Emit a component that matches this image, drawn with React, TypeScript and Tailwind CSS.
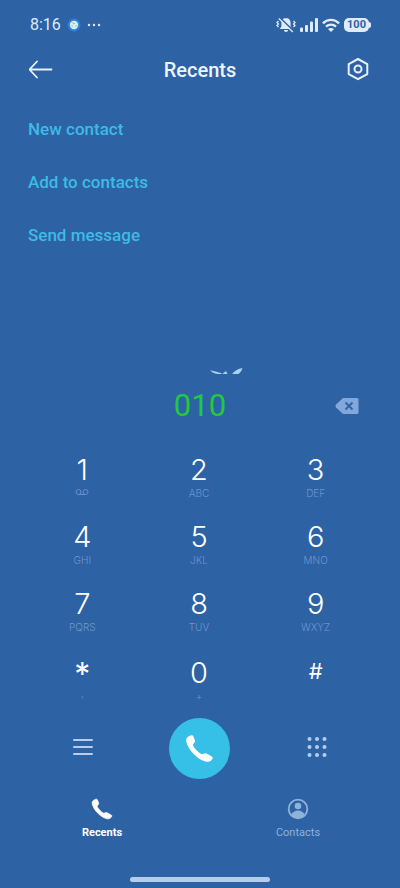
import { useState } from "react";

const KEYS = [
  { digit: "1", letters: "voicemail" },
  { digit: "2", letters: "ABC" },
  { digit: "3", letters: "DEF" },
  { digit: "4", letters: "GHI" },
  { digit: "5", letters: "JKL" },
  { digit: "6", letters: "MNO" },
  { digit: "7", letters: "PQRS" },
  { digit: "8", letters: "TUV" },
  { digit: "9", letters: "WXYZ" },
  { digit: "*", letters: "'" },
  { digit: "0", letters: "+" },
  { digit: "#", letters: "" },
];

const ACTIONS = ["New contact", "Add to contacts", "Send message"];

function digitClass(digit: string) {
  if (digit === "*") return "text-[32px] leading-9";
  if (digit === "#") return "text-[22px] leading-7";
  return "text-[29px] leading-8 font-light";
}

function HandsetIcon({ className }: { className: string }) {
  return (
    <svg viewBox="0 0 27 27" className={className} fill="currentColor" stroke="currentColor" strokeLinejoin="round" overflow="visible" aria-hidden="true">
      <path d="M.8 3C2 1.500 4 .3 6 .2c.6 0 1 .3 1.200.8L9 5.500c.2.7.1 1.200-.4 1.800L6.800 9.700c.8 2.700 5.500 8 9 9.600l2.800-.9c.7-.2 1.300-.1 1.800.2l5.500 3c.8.5 1 1.100.7 1.800-.8 2-2.600 3.300-4.800 3.400C14 27 .8 14.500.2 5.500.1 4.500.3 3.700.8 3Z" />
    </svg>
  );
}

function StatusBar() {
  return (
    <div className="flex h-12 items-center justify-between pl-[30px] pr-[29px] pt-0.5 text-[#dfeafb]">
      <div className="flex items-center">
        <span className="text-base">8:16</span>
        <svg viewBox="0 0 14 14" className="ml-1.5 size-3.5" aria-hidden="true">
          <circle cx="7" cy="7" r="6.500" fill="#2f7ee6" />
          <circle cx="7" cy="7" r="4.200" fill="#d9f3ef" />
          <path d="M5 4l4 1.500-3 1zM8.500 7l2 .5-2 2z" fill="#a8cf62" />
          <path d="M4 7l2.500 1L5 9.500z" fill="#8cc9f2" />
        </svg>
        <svg viewBox="0 0 14 4" className="ml-1.5 h-1 w-3.5" fill="currentColor" aria-hidden="true">
          <circle cx="2" cy="2" r="1.200" />
          <circle cx="7" cy="2" r="1.200" />
          <circle cx="12" cy="2" r="1.200" />
        </svg>
      </div>
      <div className="flex items-center gap-1">
        <svg viewBox="0 0 20 16" className="h-4 w-5" aria-hidden="true">
          <path d="M10 1c-3 0-4.600 2-4.600 5v3.500L3.800 12h12.400l-1.600-2.500V6c0-3-1.600-5-4.600-5ZM8 13h4c0 1.300-.8 2-2 2s-2-.7-2-2Z" fill="currentColor" />
          <path d="M2.500 4 1 5.500 2.500 7 1 8.500 2.500 10M17.500 4 19 5.500 17.500 7 19 8.500 17.500 10" fill="none" stroke="currentColor" strokeWidth="1.300" />
          <path d="M4 .8 18 14.300" stroke="#2d62a4" strokeWidth="1.600" />
          <path d="M2.800 1.500 16.800 15" stroke="currentColor" strokeWidth="1.300" />
        </svg>
        <svg viewBox="0 0 18 14" className="h-3.5 w-[18px]" fill="currentColor" aria-hidden="true">
          <rect x="0" y="9.500" width="3" height="4.500" rx="1" />
          <rect x="5" y="7" width="3" height="7" rx="1" />
          <rect x="10" y="3.500" width="3" height="10.500" rx="1" />
          <rect x="15" y="0" width="3" height="14" rx="1" />
        </svg>
        <svg viewBox="0 0 18 14" className="h-3.5 w-[18px]" fill="none" stroke="currentColor" strokeWidth="2.400" aria-hidden="true">
          <path d="M.9 5.300c4.500-4.600 11.700-4.600 16.200 0M4 8.700c2.800-2.800 7.200-2.800 10 0" />
          <path d="M9 14 6 11c1.600-1.500 4.400-1.500 6 0Z" fill="currentColor" stroke="none" />
        </svg>
        <div className="flex items-center">
          <span className="rounded-[5px] bg-[#dfeafb] px-[3px] text-[11px] leading-3.5 font-bold text-[#2d62a4]">
            100
          </span>
          <span className="h-1.5 w-0.5 rounded-r bg-[#dfeafb]" />
        </div>
      </div>
    </div>
  );
}

export default function App() {
  const [number, setNumber] = useState("010");

  return (
    <div className="flex min-h-screen flex-col bg-[#2d62a4] font-['Roboto',sans-serif] text-white">
      <StatusBar />

      <header className="flex h-11 items-center justify-between px-[29px]">
        <button type="button" aria-label="Back" className="text-[#e7f0fc]">
          <svg viewBox="0 0 24 20" className="h-5 w-6" fill="none" stroke="currentColor" strokeWidth="1.800" strokeLinecap="round" strokeLinejoin="round" aria-hidden="true">
            <path d="M22.500 9.500H.5M8 1.500l-7.500 8 7.500 8" />
          </svg>
        </button>
        <h1 className="text-xl font-medium text-[#edf4fd]">Recents</h1>
        <button type="button" aria-label="Settings" className="text-[#e7f0fc]">
          <svg viewBox="0 0 24 24" className="size-6" fill="none" stroke="currentColor" strokeWidth="2" strokeLinejoin="round" aria-hidden="true">
            <path d="M11 1 20.300 6.100v10L11 21.200 1.700 16.100v-10Z" />
            <circle cx="11" cy="11" r="3.500" />
          </svg>
        </button>
      </header>

      <nav className="mt-[11px] flex flex-col items-start px-7">
        {ACTIONS.map((label) => (
          <a key={label} href="#" className="flex h-[53px] items-center text-[17px] font-medium text-[#3dbbe5]">
            {label}
          </a>
        ))}
      </nav>

      <main className="mt-auto">
        {/* bottom edge of the empty-list illustration, cut off by the dialpad */}
        <svg viewBox="0 0 34 6" className="ml-[210px] block h-1.5 w-[34px]" fill="#a9d2f2" aria-hidden="true">
          <path d="M0 2.500C2 2.300 5 3.500 11 5L12 6H8.500C5 5.800 2 4.500 0 2.500ZM12.500 5.800 16 3l1.500 3h-5ZM22 6c3-3.500 6-5.500 10.500-6-.5 2-2 4.500-4 6Z" />
        </svg>

        <div className="grid h-16 grid-cols-[1fr_auto_1fr] items-center px-[41px]">
          <output className="col-start-2 text-[31px] text-[#22c93f]">{number}</output>
          <button
            type="button"
            aria-label="Delete digit"
            onClick={() => setNumber(number.slice(0, -1))}
            className="justify-self-end"
          >
            <svg viewBox="0 0 24 16" className="h-4 w-6" aria-hidden="true">
              <path d="M8 0h14a1.500 1.500 0 0 1 1.500 1.500v13A1.500 1.500 0 0 1 22 16H8L1 9.500Q0 8 1 6.500Z" fill="#82a8db" />
              <path d="m10.500 4.500 7 7m0-7-7 7" stroke="#2d62a4" strokeWidth="1.800" />
            </svg>
          </button>
        </div>

        <div className="grid grid-cols-3 pl-6 pr-[26px] pb-0.5 font-['Inter',sans-serif]">
          {KEYS.map(({ digit, letters }) => (
            <button
              key={digit}
              type="button"
              onClick={() => setNumber(number + digit)}
              className="flex h-[67px] flex-col items-center pt-4 nth-[n+10]:h-[69px] nth-[n+10]:pt-[18px]"
            >
              <span className={digitClass(digit)}>{digit}</span>
              {letters === "voicemail" ? (
                <svg viewBox="0 0 14 8" className="mt-0.5 h-2 w-3.5" fill="none" stroke="#6890c8" aria-hidden="true">
                  <circle cx="3.500" cy="4" r="2.500" />
                  <circle cx="10.500" cy="4" r="2.500" />
                  <path d="M3.500 6.500h7" />
                </svg>
              ) : (
                <span className="text-[10px] leading-3.5 font-light text-[#7095cd]">{letters}</span>
              )}
            </button>
          ))}
        </div>

        <div className="grid h-[76px] grid-cols-3 place-items-center px-6">
          <button type="button" aria-label="Menu">
            <svg viewBox="0 0 20 20" className="size-5" stroke="#b5cdf0" strokeWidth="2" strokeLinecap="round" aria-hidden="true">
              <path d="M1 2h18M1 9h18M1 16h18" />
            </svg>
          </button>
          <button type="button" aria-label="Call" className="flex size-[61px] items-center justify-center rounded-full bg-[#36c0e8]">
            <HandsetIcon className="size-[27px] stroke-0" />
          </button>
          <button type="button" aria-label="Toggle dialpad">
            <svg viewBox="0 0 20 22" className="h-[22px] w-5" fill="#b5cdf0" aria-hidden="true">
              {[2, 10, 18].map((y) => [2.5, 10, 17.5].map((x) => <circle key={`${x}-${y}`} cx={x} cy={y} r="2" />))}
            </svg>
          </button>
        </div>
      </main>

      <nav className="grid h-[91px] grid-cols-2 px-1 pt-3 text-[11px]">
        <a href="#" className="flex flex-col items-center gap-[5px] font-bold">
          <HandsetIcon className="my-px size-5 stroke-1" />
          Recents
        </a>
        <a href="#" className="flex flex-col items-center gap-[5px] text-[#8eb2da]">
          <svg viewBox="0 0 22 22" className="size-[22px]" aria-hidden="true">
            <circle cx="11" cy="11" r="9.300" fill="none" stroke="currentColor" strokeWidth="1.800" />
            <circle cx="11" cy="8" r="3.300" fill="currentColor" />
            <path d="M4 17c1.500-3 4-4.500 7-4.500s5.500 1.500 7 4.500c-2 2.500-4.300 3.500-7 3.500S6 19.500 4 17Z" fill="currentColor" />
          </svg>
          Contacts
        </a>
      </nav>
      <div className="mx-auto mb-1.5 h-[5px] w-[140px] rounded-full bg-[#b5cdec]" />
    </div>
  );
}
